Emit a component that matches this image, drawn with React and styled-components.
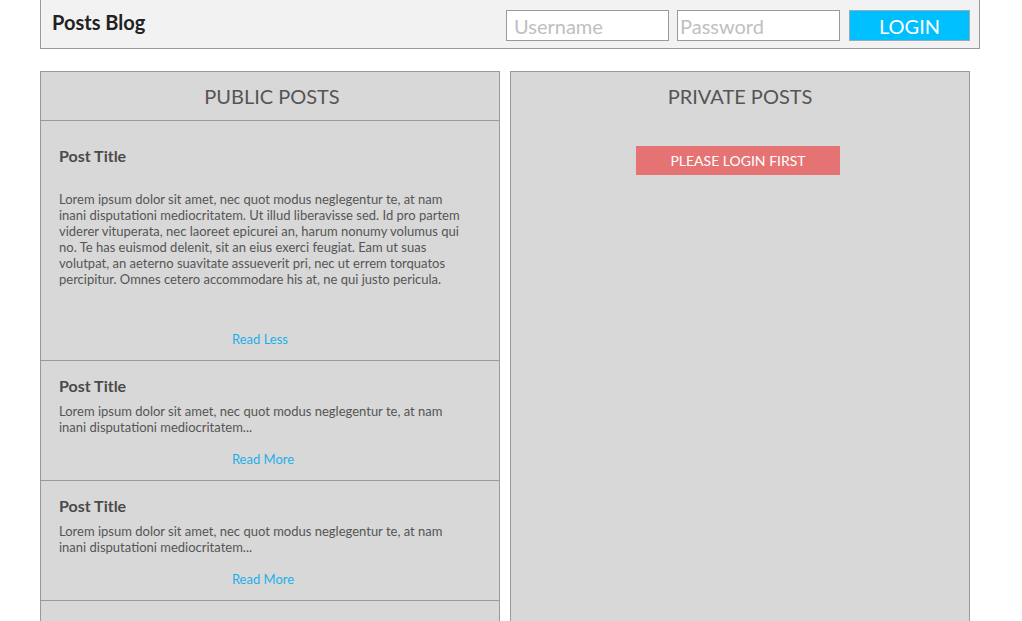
import React from "react";
import styled, { createGlobalStyle } from "styled-components";

const GlobalStyle = createGlobalStyle`
  html, body {
    margin: 0;
    padding: 0;
    background: #fff;
    font-family: Lato, "Open Sans", "Liberation Sans", sans-serif;
  }
`;

const LOREM_LONG =
  "Lorem ipsum dolor sit amet, nec quot modus neglegentur te, at nam inani disputationi mediocritatem. Ut illud liberavisse sed. Id pro partem viderer vituperata, nec laoreet epicurei an, harum nonumy volumus qui no. Te has euismod delenit, sit an eius exerci feugiat. Eam ut suas volutpat, an aeterno suavitate assueverit pri, nec ut errem torquatos percipitur. Omnes cetero accommodare his at, ne qui justo pericula.";
const LOREM_SHORT =
  "Lorem ipsum dolor sit amet, nec quot modus neglegentur te, at nam inani disputationi mediocritatem...";

const posts = [
  { id: 1, title: "Post Title", body: LOREM_LONG, expanded: true },
  { id: 2, title: "Post Title", body: LOREM_SHORT, expanded: false },
  { id: 3, title: "Post Title", body: LOREM_SHORT, expanded: false },
];

export default function App() {
  return (
    <Page>
      <GlobalStyle />
      <TopBar>
        <Brand>Posts Blog</Brand>
        <LoginForm onSubmit={(e) => e.preventDefault()}>
          <Field placeholder="Username" $pad={7} />
          <Field placeholder="Password" type="password" $pad={2} />
          <LoginButton type="submit">LOGIN</LoginButton>
        </LoginForm>
      </TopBar>
      <Columns>
        <Panel>
          <PanelHeader $divided>PUBLIC POSTS</PanelHeader>
          {posts.map((p) => (
            <Post key={p.id} post={p} />
          ))}
        </Panel>
        <Panel>
          <PanelHeader>PRIVATE POSTS</PanelHeader>
          <Notice>
            <NoticeBox>PLEASE LOGIN FIRST</NoticeBox>
          </Notice>
        </Panel>
      </Columns>
    </Page>
  );
}

function Post({ post }) {
  return (
    <PostItem $expanded={post.expanded}>
      <PostTitle>{post.title}</PostTitle>
      <PostBody $expanded={post.expanded}>{post.body}</PostBody>
      <ReadLink href="#" $expanded={post.expanded}>
        {post.expanded ? "Read Less" : "Read More"}
      </ReadLink>
    </PostItem>
  );
}

const Page = styled.div`
  width: 940px;
  margin-left: 40px;
  height: 621px;
  overflow: hidden;
`;

const TopBar = styled.header`
  display: flex;
  align-items: center;
  justify-content: space-between;
  height: 48px;
  background: #f2f2f2;
  border: 1px solid #9a9a9a;
  border-top: none;
  padding: 0 9px 0 11px;
`;

const Brand = styled.h1`
  margin: 0 0 4px;
  font-size: 20px;
  font-weight: 700;
  color: #222;
`;

const LoginForm = styled.form`
  display: flex;
  align-items: center;
  gap: 8px;
  margin-top: 2px;
`;

const Field = styled.input`
  box-sizing: border-box;
  width: 163px;
  height: 31px;
  border: 1px solid #999;
  background: #fff;
  padding: 2px 4px 0 ${(p) => p.$pad}px;
  font-family: Lato, "Open Sans", sans-serif;
  font-size: 20px;
  color: #333;
  outline: none;
  &::placeholder {
    color: #c0c0c0;
  }
`;

const LoginButton = styled.button`
  box-sizing: border-box;
  width: 121px;
  height: 31px;
  margin-left: 1px;
  border: 1px solid #9ab;
  background: #00bfff;
  color: #fff;
  font-family: Lato, "Open Sans", sans-serif;
  font-size: 20px;
  padding: 2px 0 0;
  cursor: pointer;
`;

const Columns = styled.main`
  display: flex;
  gap: 10px;
  margin-top: 22px;
  width: 930px;
`;

const Panel = styled.section`
  flex: 0 0 460px;
  box-sizing: border-box;
  background: #d8d8d8;
  border: 1px solid #999;
  min-height: 560px;
`;

const PanelHeader = styled.h2`
  margin: 0;
  height: 48px;
  display: flex;
  align-items: center;
  justify-content: center;
  padding-left: ${(p) => (p.$divided ? "4px" : "0")};
  font-size: 20px;
  font-weight: 400;
  color: #555;
  border-bottom: 1px solid ${(p) => (p.$divided ? "#999" : "transparent")};
`;

const PostItem = styled.article`
  display: flex;
  flex-direction: column;
  padding: ${(p) => (p.$expanded ? "25px" : "15px")} 0 13px 18px;
  border-bottom: 1px solid #999;
`;

const PostTitle = styled.h3`
  margin: 0;
  font-size: 16px;
  line-height: 20px;
  font-weight: 700;
  color: #4a4a4a;
`;

const PostBody = styled.p`
  width: 405px;
  margin: ${(p) => (p.$expanded ? "25px" : "7px")} 0 0;
  font-size: 13px;
  line-height: 16px;
  color: #555;
`;

const ReadLink = styled.a`
  box-sizing: border-box;
  width: 404px;
  margin-top: ${(p) => (p.$expanded ? "44px" : "16px")};
  text-align: center;
  font-size: 13px;
  line-height: 16px;
  color: #1cb0e8;
  text-decoration: none;
  padding-left: ${(p) => (p.$expanded ? "0" : "4px")};
  padding-right: ${(p) => (p.$expanded ? "2px" : "0")};
`;

const Notice = styled.div`
  display: flex;
  justify-content: center;
  padding-top: 25px;
  padding-right: 4px;
`;

const NoticeBox = styled.div`
  width: 204px;
  height: 29px;
  display: flex;
  align-items: center;
  justify-content: center;
  background: #e57373;
  color: #fff;
  font-size: 14px;
`;
